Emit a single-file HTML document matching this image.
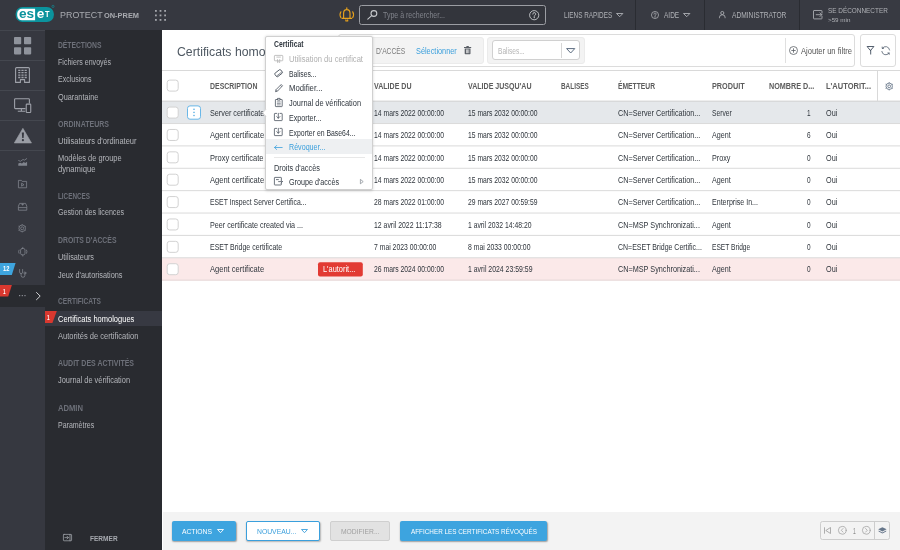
<!DOCTYPE html>
<html lang="fr"><head><meta charset="utf-8"><title>ESET PROTECT On-Prem</title>
<style>
*{box-sizing:border-box;margin:0;padding:0}
html,body{width:900px;height:550px;overflow:hidden;background:#fff;font-family:"Liberation Sans",sans-serif}
#app{will-change:transform;position:relative;width:900px;height:550px;overflow:hidden;background:#fff}
.a{position:absolute}
.t{position:absolute;white-space:nowrap;line-height:1;transform-origin:0 50%}
svg{position:absolute;overflow:visible}
.cb{position:absolute;left:166.6px;width:12px;height:12px;background:#fff;border:1px solid #d4d4d4;border-radius:3px}
.rl{position:absolute;left:162px;width:738px;height:1px;background:#dcdcdc}
</style></head><body><div id="app">

<!-- main white -->
<div class="a" style="left:162px;top:30px;width:738px;height:483px;background:#fff"></div>

<!-- header -->
<div class="a" style="left:0;top:0;width:900px;height:30px;background:#363840"></div>
<div class="a" style="left:550px;top:0;width:350px;height:30px;background:#383a42"></div>
<div class="a" style="left:635px;top:0;width:1px;height:30px;background:#2a2c32"></div>
<div class="a" style="left:703.5px;top:0;width:1px;height:30px;background:#2a2c32"></div>
<div class="a" style="left:799px;top:0;width:1px;height:30px;background:#2a2c32"></div>

<!-- logo -->
<svg style="left:0;top:0" width="60" height="30" viewBox="0 0 60 30"><rect x="15.600" y="7" width="38.300" height="15" rx="7" fill="#0b939d"/><path d="M22 8.800h13.100v11.500H22a4.800 4.800 0 0 1-4.800-4.800v-1.900a4.800 4.800 0 0 1 4.800-4.800z" fill="#fff"/><circle cx="53" cy="6.400" r="1.100" fill="none" stroke="#0b939d" stroke-width="0.600"/></svg>

<!-- grid dots -->
<svg style="left:155px;top:9.5px" width="12" height="12" viewBox="0 0 12 12" fill="#a3a5ab"><g>
<rect x="0" y="0" width="1.8" height="1.8"/><rect x="4.6" y="0" width="1.8" height="1.8"/><rect x="9.2" y="0" width="1.8" height="1.8"/>
<rect x="0" y="4.5" width="1.8" height="1.8"/><rect x="4.6" y="4.5" width="1.8" height="1.8"/><rect x="9.2" y="4.5" width="1.8" height="1.8"/>
<rect x="0" y="9" width="1.8" height="1.8"/><rect x="4.6" y="9" width="1.8" height="1.8"/><rect x="9.2" y="9" width="1.8" height="1.8"/></g></svg>

<!-- bell -->
<svg style="left:338.5px;top:7.4px" width="16" height="15" viewBox="0 0 16 15" fill="none" stroke="#e8a21c" stroke-width="1.15" stroke-linecap="round" stroke-linejoin="round">
<path d="M7.8 0.7v1.5M4.6 11.2V6.3a3.2 3.7 0 0 1 6.400 0v4.900M3 11.400h9.600M6.900 12.900v1.100h1.800v-1.100"/>
<path d="M1.900 4.800a5.600 5.600 0 0 0 0 5.800M13.700 4.800a5.600 5.600 0 0 1 0 5.800"/></svg>

<!-- search box -->
<div class="a" style="left:359px;top:5px;width:186.5px;height:19.8px;border:1px solid #9b9da3;border-radius:2.5px;background:#33353c"></div>
<svg style="left:366.5px;top:9.8px" width="11" height="10" viewBox="0 0 11 10" fill="none" stroke="#c6c8cc" stroke-width="1.1" stroke-linecap="round"><circle cx="6.9" cy="3.5" r="2.9"/><path d="M4.7 5.7L0.8 9.2"/></svg>
<svg style="left:529px;top:10px" width="10.4" height="10.4" viewBox="0 0 10.4 10.4" fill="none" stroke="#c6c8cc" stroke-width="0.9"><circle cx="5.2" cy="5.2" r="4.6"/><path d="M3.8 4.1a1.45 1.45 0 1 1 2 1.3c-.5.25-.6.5-.6 1" stroke-linecap="round"/><circle cx="5.2" cy="7.6" r="0.3" fill="#c6c8cc"/></svg>

<!-- header icons -->
<svg style="left:615.8px;top:13px" width="7.4" height="4.2" viewBox="0 0 7.4 4.2" fill="none" stroke="#b0b2b7" stroke-width="0.9" stroke-linejoin="round"><path d="M0.5 0.5h6.4L3.7 3.7z"/></svg>
<svg style="left:683.4px;top:13px" width="7.4" height="4.2" viewBox="0 0 7.4 4.2" fill="none" stroke="#b0b2b7" stroke-width="0.9" stroke-linejoin="round"><path d="M0.5 0.5h6.4L3.7 3.7z"/></svg>
<svg style="left:650.6px;top:11px" width="8" height="8" viewBox="0 0 10.4 10.4" fill="none" stroke="#b0b2b7" stroke-width="1"><circle cx="5.2" cy="5.2" r="4.6"/><path d="M3.8 4.1a1.45 1.45 0 1 1 2 1.3c-.5.25-.6.5-.6 1" stroke-linecap="round"/><circle cx="5.2" cy="7.7" r="0.35" fill="#b0b2b7"/></svg>
<svg style="left:718.6px;top:11.2px" width="6.6" height="7.4" viewBox="0 0 6.6 7.4" fill="none" stroke="#b0b2b7" stroke-width="0.85"><circle cx="3.3" cy="2" r="1.55"/><path d="M0.5 7.2V6.2a2.8 2.4 0 0 1 5.6 0v1"/></svg>
<svg style="left:812.6px;top:9.800px" width="9.600" height="9.400" viewBox="0 0 9.600 9.400" fill="none" stroke="#b0b2b7" stroke-width="0.850" stroke-linejoin="round" stroke-linecap="round"><path d="M9 3.100V1a.5.500 0 0 0-.5-.5H1a.5.500 0 0 0-.5.500v7.400a.5.500 0 0 0 .5.500h7.500a.5.500 0 0 0 .5-.5V6.300"/><path d="M3.200 4.700h5.600M7 2.900l1.800 1.800L7 6.500"/></svg>

<!-- sidebar -->
<div class="a" style="left:0;top:30px;width:45px;height:520px;background:#363840"></div>
<div class="a" style="left:0;top:30px;width:45px;height:1px;background:#43464e"></div>
<div class="a" style="left:45px;top:30px;width:117px;height:520px;background:#292b30"></div>
<div class="a" style="left:0;top:60px;width:45px;height:1px;background:#44474f"></div>
<div class="a" style="left:0;top:90px;width:45px;height:1px;background:#44474f"></div>
<div class="a" style="left:0;top:120px;width:45px;height:1px;background:#44474f"></div>
<div class="a" style="left:0;top:150px;width:45px;height:1px;background:#44474f"></div>
<div class="a" style="left:0;top:284.5px;width:45px;height:22px;background:#292b30"></div>
<div class="a" style="left:45px;top:311.3px;width:117px;height:14.8px;background:#373942"></div>

<!-- sidebar big icons -->
<svg style="left:13.8px;top:37.2px" width="17.4" height="17.6" viewBox="0 0 17.4 17.6" fill="#8f939c"><rect x="0" y="0" width="7.2" height="7.2" rx="0.8"/><rect x="10" y="0" width="7.2" height="7.2" rx="0.8"/><rect x="0" y="10.2" width="7.2" height="7.2" rx="0.8"/><rect x="10" y="10.2" width="7.2" height="7.2" rx="0.8"/></svg>
<svg style="left:15px;top:67.200px" width="15" height="16" viewBox="0 0 15 16" fill="none" stroke="#9ea1a9" stroke-width="1.100" stroke-linejoin="round"><path d="M0.600 15.400V1.600a1 1 0 0 1 1-1h11.800a1 1 0 0 1 1 1v13.800h-4.800v-2.800h-4.200v2.800z"/><g stroke-width="1.300"><path d="M3.200 3.300h2.200M6.400 3.300h2.200M9.600 3.300h2.200M3.200 5.700h2.200M6.400 5.700h2.200M9.600 5.700h2.200M3.200 8.100h2.200M6.400 8.100h2.200M9.600 8.100h2.200M3.200 10.500h2.200M6.400 10.500h2.200M9.600 10.500h2.200"/></g></svg>
<svg style="left:13.6px;top:97.6px" width="17.6" height="15.4" viewBox="0 0 17.6 15.4" fill="none" stroke="#9ea1a9" stroke-width="1.1" stroke-linejoin="round"><path d="M11.500 10.600H1.400a.8.800 0 0 1-.8-.8V1.500a.8.800 0 0 1 .8-.8h13.200a.8.800 0 0 1 .8.800v4"/><path d="M7.400 10.600v2.500M3.800 13.200h7.400"/><rect x="12.250" y="6.100" width="4.500" height="8.400" rx="0.700" fill="#31333a"/></svg>
<svg style="left:13.6px;top:127.600px" width="17.800" height="15.400" viewBox="0 0 17.800 15.400"><path d="M8.900 0.300L17.500 15H0.300z" fill="#9a9da5" stroke="#9a9da5" stroke-width="0.600" stroke-linejoin="round"/><path d="M7.800 4.600h2.200l-.4 5.400h-1.400z" fill="#363840"/><circle cx="8.900" cy="12.200" r="1.100" fill="#363840"/></svg>

<!-- sidebar small icons -->
<svg style="left:17.800px;top:157.600px" width="9.400" height="8" viewBox="0 0 9.400 8" fill="none" stroke="#80848d" stroke-width="0.800"><path d="M0.300 2.400L2.400 3.300 5 1.500 6.600 2.100 9 0.400"/><path d="M0.300 7.800V5.600L2.200 4.700 4 5.500 5.800 4.100 7.200 5 9.100 3.700V7.800z" fill="#80848d" stroke="none"/></svg>
<svg style="left:18.200px;top:180px" width="9" height="8.200" viewBox="0 0 9 8.200" fill="none" stroke="#80848d" stroke-width="0.800" stroke-linejoin="round"><path d="M0.400 7.800V0.400h3l.8 1h4.400v6.400z"/><path d="M3.600 3.200v3l2.400-1.500z"/></svg>
<svg style="left:18px;top:202.600px" width="9.200" height="7.600" viewBox="0 0 9.200 7.600" fill="none" stroke="#80848d" stroke-width="0.800" stroke-linejoin="round"><path d="M0.400 7.200V3.200L1.600 0.400h6l1.200 2.800v4zM0.400 4.600h8.400"/><path d="M3.800 1.200h1.600L4.600 2.300z" fill="#80848d"/></svg>
<svg style="left:18px;top:224.100px" width="8.400" height="8.600" viewBox="0 0 8.400 8.600" fill="none" stroke="#80848d" stroke-width="0.800"><circle cx="4.200" cy="4.300" r="3.300"/><circle cx="4.200" cy="4.300" r="1.500"/><path d="M4.200 0.200v.8M4.200 7.600v.8M0.500 2.200l.7.400M7.200 6l.7.400M0.500 6.400l.7-.4M7.200 2.600l.7-.4"/></svg>
<svg style="left:17.800px;top:246.800px" width="9.600" height="9.400" viewBox="0 0 9.600 9.400" fill="none" stroke="#80848d" stroke-width="0.800" stroke-linejoin="round" stroke-linecap="round"><rect x="2.600" y="1.500" width="4.400" height="6.400" rx="1.600"/><path d="M4.800 0.300v1.200M4.800 7.900v1.200M1 3.100a3.200 3.200 0 0 0 0 3.200M8.600 3.100a3.200 3.200 0 0 1 0 3.200"/></svg>
<svg style="left:19px;top:268.600px" width="7.600" height="8.800" viewBox="0 0 7.600 8.800" fill="none" stroke="#80848d" stroke-width="0.800" stroke-linecap="round"><path d="M0.600 0.500v2.600a1.500 1.500 0 0 0 3 0V0.500M2.100 4.600v1.800a1.900 1.900 0 0 0 3.800 0V5"/><circle cx="5.900" cy="4" r="1"/></svg>
<!-- badges -->
<svg style="left:0;top:262.600px" width="16" height="12" viewBox="0 0 16 12"><path d="M0 0h15.600L11.800 12H0z" fill="#3ea4dd"/></svg>
<svg style="left:0;top:285.300px" width="12" height="11.600" viewBox="0 0 12 11.600"><path d="M0 0h11.900L8.200 11.600H0z" fill="#d8382f"/></svg>
<svg style="left:45px;top:311.300px" width="12" height="12" viewBox="0 0 12 12"><path d="M0 0h11.800L7.400 12H0z" fill="#d8382f"/></svg>
<!-- dots + chevron -->
<svg style="left:19px;top:295.400px" width="7" height="1.400" viewBox="0 0 7 1.400" fill="#8f9199"><rect x="0" y="0" width="1.200" height="1.200"/><rect x="2.700" y="0" width="1.200" height="1.200"/><rect x="5.400" y="0" width="1.200" height="1.200"/></svg>
<svg style="left:36px;top:292px" width="4.800" height="8.200" viewBox="0 0 4.800 8.200" fill="none" stroke="#e4e5e8" stroke-width="0.900" stroke-linecap="round" stroke-linejoin="round"><path d="M0.500 0.500L4.200 4.100 0.500 7.700"/></svg>
<!-- fermer icon -->
<svg style="left:62.700px;top:533.700px" width="9" height="7.200" viewBox="0 0 9 7.200" fill="none" stroke="#a3a6ac" stroke-width="0.750" stroke-linejoin="round" stroke-linecap="round"><rect x="0.400" y="0.400" width="8.200" height="6.400" rx="0.600"/><path d="M7 0.400v6.400M1.900 3.600h3.400M4 2.200l1.400 1.400L4 5"/></svg>

<!-- toolbar -->
<div class="a" style="left:162px;top:70px;width:738px;height:1px;background:#d9d9d9"></div>
<div class="a" style="left:337.500px;top:33.700px;width:517.500px;height:33.400px;border:1px solid #dcdcdc;border-radius:3px;background:#fff"></div>
<div class="a" style="left:860px;top:33.700px;width:35.800px;height:33.400px;border:1px solid #dcdcdc;border-radius:3px;background:#fff"></div>
<div class="a" style="left:341px;top:37px;width:143.400px;height:26.600px;border:1px solid #ebebeb;border-radius:3px;background:#f3f3f3"></div>
<div class="a" style="left:487px;top:37px;width:98.200px;height:26.600px;border:1px solid #ebebeb;border-radius:3px;background:#f3f3f3"></div>
<div class="a" style="left:492px;top:40px;width:88px;height:20px;border:1px solid #d0d0d0;border-radius:3px;background:#fff"></div>
<div class="a" style="left:561.300px;top:43px;width:1px;height:14.600px;background:#d6d6d6"></div>
<div class="a" style="left:785px;top:37.500px;width:1px;height:25.600px;background:#e0e0e0"></div>
<svg style="left:565.800px;top:47.700px" width="9.400" height="5.800" viewBox="0 0 9.400 5.800" fill="none" stroke="#5b6b7f" stroke-width="1" stroke-linejoin="round"><path d="M0.600 0.600h8.200L4.700 5z"/></svg>
<!-- trash -->
<svg style="left:463.800px;top:46px" width="7.200" height="8.200" viewBox="0 0 7.200 8.200" fill="#5a5f66"><rect x="0" y="1" width="7.200" height="1"/><rect x="2.400" y="0" width="2.400" height="1.200"/><path d="M0.700 2.600h5.800v5a.6.600 0 0 1-.6.600H1.300a.6.600 0 0 1-.6-.6z"/><g fill="#f3f3f3"><rect x="2" y="3.400" width="0.700" height="3.800"/><rect x="3.250" y="3.400" width="0.700" height="3.800"/><rect x="4.500" y="3.400" width="0.700" height="3.800"/></g></svg>
<!-- add filter plus -->
<svg style="left:788.600px;top:46.200px" width="9" height="9" viewBox="0 0 9 9" fill="none" stroke="#5a5f66" stroke-width="0.800"><circle cx="4.500" cy="4.500" r="4"/><path d="M4.500 2.300v4.400M2.300 4.500h4.400"/></svg>
<!-- funnel + refresh -->
<svg style="left:866.600px;top:46.200px" width="7.400" height="8.600" viewBox="0 0 7.400 8.600" fill="none" stroke="#3f4c5c" stroke-width="0.900" stroke-linejoin="round" stroke-linecap="round"><path d="M0.500 0.500h6.400L3.700 4.300z"/><path d="M3.700 4.200v3.900"/></svg>
<svg style="left:880.800px;top:46px" width="9.400" height="9.400" viewBox="0 0 9.400 9.400" fill="none" stroke="#4a5767" stroke-width="0.750" stroke-linecap="round"><path d="M8.600 4A4 4 0 0 0 1.300 2.400M0.800 5.400A4 4 0 0 0 8.100 7"/><path d="M1.200 1v1.400h1.400M8.200 8.400V7H6.800" stroke-linejoin="round"/></svg>

<!-- table -->
<svg style="left:0;top:0" width="900" height="550" viewBox="0 0 900 550">
<rect x="162" y="101.15" width="738" height="22.38" fill="#e5e8eb"/>
<rect x="162" y="257.77" width="738" height="22.38" fill="#fbe9e9"/>
<rect x="162" y="100.65" width="738" height="1" fill="#cfcfcf"/>
<rect x="162" y="123.03" width="738" height="1" fill="#dadada"/>
<rect x="162" y="145.40" width="738" height="1" fill="#dadada"/>
<rect x="162" y="167.78" width="738" height="1" fill="#dadada"/>
<rect x="162" y="190.15" width="738" height="1" fill="#dadada"/>
<rect x="162" y="212.53" width="738" height="1" fill="#dadada"/>
<rect x="162" y="234.90" width="738" height="1" fill="#dadada"/>
<rect x="162" y="257.27" width="738" height="1" fill="#dadada"/>
<rect x="162" y="279.65" width="738" height="1" fill="#e3d3d3"/>
<rect x="877" y="70.500" width="1" height="30.500" fill="#d9d9d9"/>
<rect x="167.200" y="80.10" width="11" height="11" rx="2.500" fill="#fff" stroke="#d2d2d2" stroke-width="1"/>
<rect x="167.200" y="107.09" width="11" height="11" rx="2.500" fill="#fff" stroke="#d2d2d2" stroke-width="1"/>
<rect x="167.200" y="129.46" width="11" height="11" rx="2.500" fill="#fff" stroke="#d2d2d2" stroke-width="1"/>
<rect x="167.200" y="151.84" width="11" height="11" rx="2.500" fill="#fff" stroke="#d2d2d2" stroke-width="1"/>
<rect x="167.200" y="174.21" width="11" height="11" rx="2.500" fill="#fff" stroke="#d2d2d2" stroke-width="1"/>
<rect x="167.200" y="196.59" width="11" height="11" rx="2.500" fill="#fff" stroke="#d2d2d2" stroke-width="1"/>
<rect x="167.200" y="218.96" width="11" height="11" rx="2.500" fill="#fff" stroke="#d2d2d2" stroke-width="1"/>
<rect x="167.200" y="241.34" width="11" height="11" rx="2.500" fill="#fff" stroke="#d2d2d2" stroke-width="1"/>
<rect x="167.200" y="263.71" width="11" height="11" rx="2.500" fill="#fff" stroke="#d2d2d2" stroke-width="1"/>
<rect x="187.500" y="105.900" width="13" height="13.300" rx="2.500" fill="#fff" stroke="#69b7e8" stroke-width="1"/>
<rect x="193.350" y="108.65" width="1.300" height="1.300" fill="#4aa8e0"/>
<rect x="193.350" y="111.75" width="1.300" height="1.300" fill="#4aa8e0"/>
<rect x="193.350" y="114.85" width="1.300" height="1.300" fill="#4aa8e0"/>
<rect x="318" y="262.200" width="44.800" height="14.300" rx="2" fill="#e23a33"/>
</svg>
<!-- gear -->
<svg style="left:884.800px;top:81.800px" width="8.400" height="8.600" viewBox="0 0 8.400 8.600" fill="none" stroke="#5b6b7f" stroke-width="0.800"><circle cx="4.200" cy="4.300" r="3.200"/><circle cx="4.200" cy="4.300" r="1.400"/><path d="M4.200 0.200v.9M4.200 7.500v.9M0.600 2.200l.8.450M7 5.950l.8.450M0.600 6.400l.8-.45M7 2.650l.8-.450"/></svg>

<!-- bottom bar -->
<div class="a" style="left:163px;top:512px;width:737px;height:38px;background:#f3f3f3"></div>
<div class="a" style="left:172px;top:521px;width:64px;height:19.700px;border-radius:2px;background:#3da4df;box-shadow:0.500px 1px 1.500px rgba(0,0,0,.35)"></div>
<div class="a" style="left:246px;top:521px;width:74px;height:19.700px;border-radius:2px;background:#fff;border:1px solid #3a9fdc;box-shadow:0.500px 1px 1.500px rgba(0,0,0,.25)"></div>
<div class="a" style="left:330.300px;top:521px;width:59.400px;height:19.700px;border-radius:2px;background:#e2e2e2;border:1px solid #cfcfcf"></div>
<div class="a" style="left:400px;top:521px;width:147.300px;height:19.700px;border-radius:2px;background:#3da4df;box-shadow:0.500px 1px 1.500px rgba(0,0,0,.35)"></div>
<svg style="left:217.300px;top:529px" width="7" height="4.200" viewBox="0 0 7 4.200" fill="none" stroke="#fff" stroke-width="0.900" stroke-linejoin="round"><path d="M0.500 0.500h6L3.500 3.700z"/></svg>
<svg style="left:301.200px;top:529px" width="7" height="4.200" viewBox="0 0 7 4.200" fill="none" stroke="#3a9fdc" stroke-width="0.900" stroke-linejoin="round"><path d="M0.500 0.500h6L3.500 3.700z"/></svg>
<!-- pagination -->
<div class="a" style="left:820px;top:521px;width:69.800px;height:18.800px;border:1px solid #cdcdcd;border-radius:2.500px;background:#f3f3f3"></div>
<div class="a" style="left:874.200px;top:521px;width:1px;height:18.800px;background:#cdcdcd"></div>
<svg style="left:824.200px;top:527px" width="7" height="7" viewBox="0 0 7 7" fill="none" stroke="#9a9a9a" stroke-width="0.800" stroke-linejoin="round"><path d="M0.500 0.300v6.400M6.500 0.500v6L1.800 3.500z"/></svg>
<svg style="left:838.200px;top:526.200px" width="8.600" height="8.600" viewBox="0 0 8.600 8.600" fill="none" stroke="#9a9a9a" stroke-width="0.700" stroke-linecap="round" stroke-linejoin="round"><circle cx="4.300" cy="4.300" r="3.900"/><path d="M5 2.500L3.300 4.300 5 6.100"/></svg>
<svg style="left:861.800px;top:526.200px" width="8.600" height="8.600" viewBox="0 0 8.600 8.600" fill="none" stroke="#9a9a9a" stroke-width="0.700" stroke-linecap="round" stroke-linejoin="round"><circle cx="4.300" cy="4.300" r="3.900"/><path d="M3.600 2.500L5.300 4.300 3.600 6.100"/></svg>
<svg style="left:877.600px;top:527.200px" width="8.800" height="6.800" viewBox="0 0 8.800 6.800" fill="#66768a"><path d="M4.400 0.200L8.600 2.200 4.400 4.400 0.200 2.200z"/><path d="M0.600 3.400v1L4.400 6.600l3.800-2.200v-1L4.400 5.400z"/></svg>

<span class="t" style="left:59.7px;top:10.00px;font-size:9.8px;color:#a9abb0;transform:scaleX(0.9100);">PROTECT</span>
<span class="t" style="left:104.3px;top:13.00px;font-size:6.9px;color:#a9abb0;font-weight:700;transform:scaleX(1.0754);">ON-PREM</span>
<span class="t" style="left:383.0px;top:11.00px;font-size:8.4px;color:#80838b;transform:scaleX(0.8375);">Type à rechercher...</span>
<span class="t" style="left:563.8px;top:11.00px;font-size:8.4px;color:#b0b2b7;transform:scaleX(0.7613);">LIENS RAPIDES</span>
<span class="t" style="left:664.4px;top:11.00px;font-size:8.4px;color:#b0b2b7;transform:scaleX(0.7770);">AIDE</span>
<span class="t" style="left:732.4px;top:11.00px;font-size:8.4px;color:#b0b2b7;transform:scaleX(0.7934);">ADMINISTRATOR</span>
<span class="t" style="left:827.6px;top:7.00px;font-size:7.5px;color:#b0b2b7;transform:scaleX(0.8541);">SE DÉCONNECTER</span>
<span class="t" style="left:827.6px;top:17.00px;font-size:6.2px;color:#b0b2b7;transform:scaleX(1.0096);">&gt;59 min</span>
<span class="t" style="left:57.6px;top:41.00px;font-size:8.3px;color:#6d7079;font-weight:700;transform:scaleX(0.8133);">DÉTECTIONS</span>
<span class="t" style="left:57.6px;top:58.00px;font-size:8.4px;color:#b4b6bb;transform:scaleX(0.8450);">Fichiers envoyés</span>
<span class="t" style="left:57.6px;top:75.00px;font-size:8.4px;color:#b4b6bb;transform:scaleX(0.8368);">Exclusions</span>
<span class="t" style="left:57.6px;top:93.00px;font-size:8.4px;color:#b4b6bb;transform:scaleX(0.8740);">Quarantaine</span>
<span class="t" style="left:57.6px;top:120.00px;font-size:8.3px;color:#6d7079;font-weight:700;transform:scaleX(0.8467);">ORDINATEURS</span>
<span class="t" style="left:57.6px;top:137.00px;font-size:8.4px;color:#b4b6bb;transform:scaleX(0.8949);">Utilisateurs d'ordinateur</span>
<span class="t" style="left:57.6px;top:154.00px;font-size:8.4px;color:#b4b6bb;transform:scaleX(0.8856);">Modèles de groupe</span>
<span class="t" style="left:57.6px;top:165.00px;font-size:8.4px;color:#b4b6bb;transform:scaleX(0.9150);">dynamique</span>
<span class="t" style="left:57.6px;top:192.00px;font-size:8.3px;color:#6d7079;font-weight:700;transform:scaleX(0.7628);">LICENCES</span>
<span class="t" style="left:57.6px;top:208.00px;font-size:8.4px;color:#b4b6bb;transform:scaleX(0.8540);">Gestion des licences</span>
<span class="t" style="left:57.6px;top:236.00px;font-size:8.3px;color:#6d7079;font-weight:700;transform:scaleX(0.8278);">DROITS D'ACCÈS</span>
<span class="t" style="left:57.6px;top:253.00px;font-size:8.4px;color:#b4b6bb;transform:scaleX(0.8691);">Utilisateurs</span>
<span class="t" style="left:57.6px;top:271.00px;font-size:8.4px;color:#b4b6bb;transform:scaleX(0.8744);">Jeux d'autorisations</span>
<span class="t" style="left:57.6px;top:297.00px;font-size:8.3px;color:#6d7079;font-weight:700;transform:scaleX(0.7929);">CERTIFICATS</span>
<span class="t" style="left:57.6px;top:315.00px;font-size:8.4px;color:#ffffff;transform:scaleX(0.8957);">Certificats homologues</span>
<span class="t" style="left:57.6px;top:332.00px;font-size:8.4px;color:#b4b6bb;transform:scaleX(0.8994);">Autorités de certification</span>
<span class="t" style="left:57.6px;top:359.00px;font-size:8.3px;color:#6d7079;font-weight:700;transform:scaleX(0.8440);">AUDIT DES ACTIVITÉS</span>
<span class="t" style="left:57.6px;top:376.00px;font-size:8.4px;color:#b4b6bb;transform:scaleX(0.8838);">Journal de vérification</span>
<span class="t" style="left:57.6px;top:404.00px;font-size:8.3px;color:#6d7079;font-weight:700;transform:scaleX(0.9190);">ADMIN</span>
<span class="t" style="left:57.6px;top:421.00px;font-size:8.4px;color:#b4b6bb;transform:scaleX(0.8361);">Paramètres</span>
<span class="t" style="left:89.6px;top:535.00px;font-size:7.8px;color:#a6a9af;font-weight:700;transform:scaleX(0.8383);">FERMER</span>
<span class="t" style="left:2.8px;top:266.00px;font-size:6.6px;color:#fff;font-weight:700;transform:scaleX(0.8715);">12</span>
<span class="t" style="left:2.8px;top:289.00px;font-size:6.6px;color:#fff;font-weight:700;transform:scaleX(0.7081);">1</span>
<span class="t" style="left:47.4px;top:315.00px;font-size:6.6px;color:#fff;font-weight:700;transform:scaleX(0.7081);">1</span>
<span class="t" style="left:176.6px;top:46.00px;font-size:12px;color:#4e5862;transform:scaleX(1.0217);">Certificats homologues</span>
<span class="t" style="left:344.8px;top:48.00px;font-size:8.2px;color:#7a7a7a;transform:scaleX(0.7465);">GROUPE</span>
<span class="t" style="left:375.7px;top:48.00px;font-size:8.2px;color:#7a7a7a;transform:scaleX(0.8210);">D'ACCÈS</span>
<span class="t" style="left:415.7px;top:48.00px;font-size:8.2px;color:#3a9fdc;transform:scaleX(0.8964);">Sélectionner</span>
<span class="t" style="left:498.3px;top:48.00px;font-size:8.2px;color:#b5b5b5;transform:scaleX(0.8038);">Balises...</span>
<span class="t" style="left:801.0px;top:48.00px;font-size:8.2px;color:#555;transform:scaleX(0.9260);">Ajouter un filtre</span>
<span class="t" style="left:209.8px;top:82.00px;font-size:8.4px;color:#5c5c5c;font-weight:700;transform:scaleX(0.8279);">DESCRIPTION</span>
<span class="t" style="left:373.9px;top:82.00px;font-size:8.4px;color:#5c5c5c;font-weight:700;transform:scaleX(0.8424);">VALIDE DU</span>
<span class="t" style="left:467.5px;top:82.00px;font-size:8.4px;color:#5c5c5c;font-weight:700;transform:scaleX(0.8426);">VALIDE JUSQU'AU</span>
<span class="t" style="left:560.8px;top:82.00px;font-size:8.4px;color:#5c5c5c;font-weight:700;transform:scaleX(0.7628);">BALISES</span>
<span class="t" style="left:617.7px;top:82.00px;font-size:8.4px;color:#5c5c5c;font-weight:700;transform:scaleX(0.8033);">ÉMETTEUR</span>
<span class="t" style="left:712.3px;top:82.00px;font-size:8.4px;color:#5c5c5c;font-weight:700;transform:scaleX(0.8677);">PRODUIT</span>
<span class="t" style="left:769.0px;top:82.00px;font-size:8.4px;color:#5c5c5c;font-weight:700;transform:scaleX(0.8616);">NOMBRE D...</span>
<span class="t" style="left:826.0px;top:82.00px;font-size:8.4px;color:#5c5c5c;font-weight:700;transform:scaleX(0.8958);">L'AUTORIT...</span>
<span class="t" style="left:209.6px;top:109.00px;font-size:8.4px;color:#2f353c;transform:scaleX(0.8656);">Server certificate</span>
<span class="t" style="left:373.9px;top:109.00px;font-size:8.4px;color:#2f353c;transform:scaleX(0.8126);">14 mars 2022 00:00:00</span>
<span class="t" style="left:467.5px;top:109.00px;font-size:8.4px;color:#2f353c;transform:scaleX(0.8068);">15 mars 2032 00:00:00</span>
<span class="t" style="left:617.7px;top:109.00px;font-size:8.4px;color:#2f353c;transform:scaleX(0.8646);">CN=Server Certification...</span>
<span class="t" style="left:712.3px;top:109.00px;font-size:8.4px;color:#2f353c;transform:scaleX(0.7985);">Server</span>
<span class="t" style="left:806.6px;top:109.00px;font-size:8.4px;color:#2f353c;transform:scaleX(0.7706);">1</span>
<span class="t" style="left:826.0px;top:109.00px;font-size:8.4px;color:#2f353c;transform:scaleX(0.8661);">Oui</span>
<span class="t" style="left:209.6px;top:131.00px;font-size:8.4px;color:#2f353c;transform:scaleX(0.9007);">Agent certificate</span>
<span class="t" style="left:373.9px;top:131.00px;font-size:8.4px;color:#2f353c;transform:scaleX(0.8126);">14 mars 2022 00:00:00</span>
<span class="t" style="left:467.5px;top:131.00px;font-size:8.4px;color:#2f353c;transform:scaleX(0.8068);">15 mars 2032 00:00:00</span>
<span class="t" style="left:617.7px;top:131.00px;font-size:8.4px;color:#2f353c;transform:scaleX(0.8646);">CN=Server Certification...</span>
<span class="t" style="left:712.3px;top:131.00px;font-size:8.4px;color:#2f353c;transform:scaleX(0.8542);">Agent</span>
<span class="t" style="left:806.6px;top:131.00px;font-size:8.4px;color:#2f353c;transform:scaleX(0.7706);">6</span>
<span class="t" style="left:826.0px;top:131.00px;font-size:8.4px;color:#2f353c;transform:scaleX(0.8661);">Oui</span>
<span class="t" style="left:209.6px;top:154.00px;font-size:8.4px;color:#2f353c;transform:scaleX(0.8963);">Proxy certificate</span>
<span class="t" style="left:373.9px;top:154.00px;font-size:8.4px;color:#2f353c;transform:scaleX(0.8126);">14 mars 2022 00:00:00</span>
<span class="t" style="left:467.5px;top:154.00px;font-size:8.4px;color:#2f353c;transform:scaleX(0.8068);">15 mars 2032 00:00:00</span>
<span class="t" style="left:617.7px;top:154.00px;font-size:8.4px;color:#2f353c;transform:scaleX(0.8646);">CN=Server Certification...</span>
<span class="t" style="left:712.3px;top:154.00px;font-size:8.4px;color:#2f353c;transform:scaleX(0.8589);">Proxy</span>
<span class="t" style="left:806.6px;top:154.00px;font-size:8.4px;color:#2f353c;transform:scaleX(0.7706);">0</span>
<span class="t" style="left:826.0px;top:154.00px;font-size:8.4px;color:#2f353c;transform:scaleX(0.8661);">Oui</span>
<span class="t" style="left:209.6px;top:176.00px;font-size:8.4px;color:#2f353c;transform:scaleX(0.9007);">Agent certificate</span>
<span class="t" style="left:373.9px;top:176.00px;font-size:8.4px;color:#2f353c;transform:scaleX(0.8126);">14 mars 2022 00:00:00</span>
<span class="t" style="left:467.5px;top:176.00px;font-size:8.4px;color:#2f353c;transform:scaleX(0.8068);">15 mars 2032 00:00:00</span>
<span class="t" style="left:617.7px;top:176.00px;font-size:8.4px;color:#2f353c;transform:scaleX(0.8646);">CN=Server Certification...</span>
<span class="t" style="left:712.3px;top:176.00px;font-size:8.4px;color:#2f353c;transform:scaleX(0.8542);">Agent</span>
<span class="t" style="left:806.6px;top:176.00px;font-size:8.4px;color:#2f353c;transform:scaleX(0.7706);">0</span>
<span class="t" style="left:826.0px;top:176.00px;font-size:8.4px;color:#2f353c;transform:scaleX(0.8661);">Oui</span>
<span class="t" style="left:209.6px;top:198.00px;font-size:8.4px;color:#2f353c;transform:scaleX(0.8164);">ESET Inspect Server Certifica...</span>
<span class="t" style="left:373.9px;top:198.00px;font-size:8.4px;color:#2f353c;transform:scaleX(0.8126);">28 mars 2022 01:00:00</span>
<span class="t" style="left:467.5px;top:198.00px;font-size:8.4px;color:#2f353c;transform:scaleX(0.8068);">29 mars 2027 00:59:59</span>
<span class="t" style="left:617.7px;top:198.00px;font-size:8.4px;color:#2f353c;transform:scaleX(0.8646);">CN=Server Certification...</span>
<span class="t" style="left:712.3px;top:198.00px;font-size:8.4px;color:#2f353c;transform:scaleX(0.8445);">Enterprise In...</span>
<span class="t" style="left:806.6px;top:198.00px;font-size:8.4px;color:#2f353c;transform:scaleX(0.7706);">0</span>
<span class="t" style="left:826.0px;top:198.00px;font-size:8.4px;color:#2f353c;transform:scaleX(0.8661);">Oui</span>
<span class="t" style="left:209.6px;top:221.00px;font-size:8.4px;color:#2f353c;transform:scaleX(0.8583);">Peer certificate created via ...</span>
<span class="t" style="left:373.9px;top:221.00px;font-size:8.4px;color:#2f353c;transform:scaleX(0.8229);">12 avril 2022 11:17:38</span>
<span class="t" style="left:467.5px;top:221.00px;font-size:8.4px;color:#2f353c;transform:scaleX(0.8117);">1 avril 2032 14:48:20</span>
<span class="t" style="left:617.7px;top:221.00px;font-size:8.4px;color:#2f353c;transform:scaleX(0.8660);">CN=MSP Synchronizati...</span>
<span class="t" style="left:712.3px;top:221.00px;font-size:8.4px;color:#2f353c;transform:scaleX(0.8542);">Agent</span>
<span class="t" style="left:806.6px;top:221.00px;font-size:8.4px;color:#2f353c;transform:scaleX(0.7706);">0</span>
<span class="t" style="left:826.0px;top:221.00px;font-size:8.4px;color:#2f353c;transform:scaleX(0.8661);">Oui</span>
<span class="t" style="left:209.6px;top:243.00px;font-size:8.4px;color:#2f353c;transform:scaleX(0.8341);">ESET Bridge certificate</span>
<span class="t" style="left:373.9px;top:243.00px;font-size:8.4px;color:#2f353c;transform:scaleX(0.8157);">7 mai 2023 00:00:00</span>
<span class="t" style="left:467.5px;top:243.00px;font-size:8.4px;color:#2f353c;transform:scaleX(0.8183);">8 mai 2033 00:00:00</span>
<span class="t" style="left:617.7px;top:243.00px;font-size:8.4px;color:#2f353c;transform:scaleX(0.8338);">CN=ESET Bridge Certific...</span>
<span class="t" style="left:712.3px;top:243.00px;font-size:8.4px;color:#2f353c;transform:scaleX(0.7915);">ESET Bridge</span>
<span class="t" style="left:806.6px;top:243.00px;font-size:8.4px;color:#2f353c;transform:scaleX(0.7706);">0</span>
<span class="t" style="left:826.0px;top:243.00px;font-size:8.4px;color:#2f353c;transform:scaleX(0.8661);">Oui</span>
<span class="t" style="left:209.6px;top:265.00px;font-size:8.4px;color:#2f353c;transform:scaleX(0.9007);">Agent certificate</span>
<span class="t" style="left:373.9px;top:265.00px;font-size:8.4px;color:#2f353c;transform:scaleX(0.8126);">26 mars 2024 00:00:00</span>
<span class="t" style="left:467.5px;top:265.00px;font-size:8.4px;color:#2f353c;transform:scaleX(0.8244);">1 avril 2024 23:59:59</span>
<span class="t" style="left:617.7px;top:265.00px;font-size:8.4px;color:#2f353c;transform:scaleX(0.8660);">CN=MSP Synchronizati...</span>
<span class="t" style="left:712.3px;top:265.00px;font-size:8.4px;color:#2f353c;transform:scaleX(0.8542);">Agent</span>
<span class="t" style="left:806.6px;top:265.00px;font-size:8.4px;color:#2f353c;transform:scaleX(0.7706);">0</span>
<span class="t" style="left:826.0px;top:265.00px;font-size:8.4px;color:#2f353c;transform:scaleX(0.8661);">Oui</span>
<span class="t" style="left:322.9px;top:265.00px;font-size:8.4px;color:#ffffff;transform:scaleX(0.8846);">L'autorit...</span>
<span class="t" style="left:182.3px;top:528.00px;font-size:7.6px;color:#fff;transform:scaleX(0.8885);">ACTIONS</span>
<span class="t" style="left:256.7px;top:528.00px;font-size:7.6px;color:#3a9fdc;transform:scaleX(0.8954);">NOUVEAU...</span>
<span class="t" style="left:340.7px;top:528.00px;font-size:7.6px;color:#a0a0a0;transform:scaleX(0.8883);">MODIFIER...</span>
<span class="t" style="left:410.7px;top:528.00px;font-size:7.6px;color:#fff;transform:scaleX(0.8356);">AFFICHER LES CERTIFICATS RÉVOQUÉS</span>
<span class="t" style="left:853.0px;top:527.00px;font-size:8.4px;color:#8a8a8a;transform:scaleX(0.5993);">1</span>
<!-- popup -->
<div class="a" style="left:265px;top:36px;width:108px;height:154px;background:#fff;border:1px solid #d0d0d0;border-radius:2px;box-shadow:0 0.5px 3px rgba(0,0,0,.16)"></div>
<div class="a" style="left:266px;top:139px;width:106px;height:15px;background:#eef0f2"></div>
<div class="a" style="left:274px;top:157px;width:91px;height:1px;background:#e8e8e8"></div>
<!-- popup pointer -->
<svg style="left:261.600px;top:108.900px" width="4.400" height="7.600" viewBox="0 0 4.400 7.600"><path d="M4.400 0L0.700 3.800l3.700 3.800z" fill="#fff"/><path d="M4.200 0.200L0.700 3.800l3.500 3.600" fill="none" stroke="#d6d6d6" stroke-width="0.700"/></svg>
<!-- popup icons -->
<svg style="left:274px;top:54.500px" width="9.200" height="8" viewBox="0 0 9.200 8" fill="none" stroke="#b4b4b4" stroke-width="0.800" stroke-linejoin="round"><rect x="0.400" y="0.400" width="8.400" height="5.400" rx="0.600"/><path d="M2.400 2.100h4.400M3.500 4.200v3.400l1.100-.8 1.100.8V4.200"/></svg>
<svg style="left:273.800px;top:68.600px" width="9.400" height="8.400" viewBox="0 0 9.400 8.400" fill="none" stroke="#4a535e" stroke-width="0.850" stroke-linejoin="round"><g transform="rotate(-38 4.600 4.200)"><rect x="0.900" y="2" width="7.400" height="4.400" rx="1"/><path d="M1.200 5.200h6.800" stroke-width="0.600"/></g></svg>
<svg style="left:274.600px;top:84px" width="8" height="8.200" viewBox="0 0 8 8.200" fill="none" stroke="#4a535e" stroke-width="0.800" stroke-linejoin="round"><path d="M0.500 7.700l.5-2L6.200 0.500l1.300 1.300L2.400 7.200z"/><path d="M5.300 1.400l1.300 1.300M1 5.700l1.400 1.500" stroke-width="0.600"/></svg>
<svg style="left:274.800px;top:98.200px" width="7.600" height="9" viewBox="0 0 7.600 9" fill="none" stroke="#4a535e" stroke-width="0.800" stroke-linejoin="round"><rect x="0.400" y="1.500" width="6.800" height="7.100" rx="0.400"/><rect x="2.500" y="0.400" width="2.600" height="1.700" fill="#fff"/><path d="M1.900 3.900h3.800M1.900 5.400h3.800M1.900 6.900h3.800" stroke-width="0.600"/></svg>
<svg style="left:274px;top:113px" width="8.600" height="8" viewBox="0 0 8.600 8" fill="none" stroke="#4a535e" stroke-width="0.800" stroke-linejoin="round" stroke-linecap="round"><path d="M2.600 0.400H0.900a.5.500 0 0 0-.5.500v6.200a.5.500 0 0 0 .5.500h6.800a.5.500 0 0 0 .5-.5V0.900a.5.500 0 0 0-.5-.5H6"/><path d="M4.300 0.300v4.900M2.700 3.600l1.600 1.600 1.600-1.600"/></svg>
<svg style="left:274px;top:127.700px" width="8.600" height="8" viewBox="0 0 8.600 8" fill="none" stroke="#4a535e" stroke-width="0.800" stroke-linejoin="round" stroke-linecap="round"><path d="M2.600 0.400H0.900a.5.500 0 0 0-.5.500v6.200a.5.500 0 0 0 .5.500h6.800a.5.500 0 0 0 .5-.5V0.900a.5.500 0 0 0-.5-.5H6"/><path d="M4.300 0.300v4.900M2.700 3.600l1.600 1.600 1.600-1.600"/></svg>
<svg style="left:274.400px;top:144.600px" width="8.600" height="5" viewBox="0 0 8.600 5" fill="none" stroke="#3a9fdc" stroke-width="0.800" stroke-linecap="round" stroke-linejoin="round"><path d="M0.600 2.500h7.600M2.600 0.500L0.600 2.500l2 2"/></svg>
<svg style="left:274px;top:177.200px" width="9" height="8.400" viewBox="0 0 9 8.400" fill="none" stroke="#4a535e" stroke-width="0.800" stroke-linejoin="round" stroke-linecap="round"><path d="M7.400 2.800V0.900a.5.500 0 0 0-.5-.5H0.900a.5.500 0 0 0-.5.500v6.600a.5.500 0 0 0 .5.500h6a.5.500 0 0 0 .5-.5V6.300"/><path d="M2.400 2.600h2M4.600 4.600h3.800M7 3.200l1.400 1.400L7 6"/></svg>
<svg style="left:359.600px;top:179px" width="3.600" height="5.200" viewBox="0 0 3.600 5.200" fill="none" stroke="#6a727b" stroke-width="0.600" stroke-linejoin="round"><path d="M0.400 0.400v4.400L3.200 2.600z"/></svg>

<span class="t" style="left:273.6px;top:40.00px;font-size:8.3px;color:#2f363e;font-weight:700;transform:scaleX(0.8202);">Certificat</span>
<span class="t" style="left:288.8px;top:55.00px;font-size:8.4px;color:#b0b0b0;transform:scaleX(0.9083);">Utilisation du certificat</span>
<span class="t" style="left:288.8px;top:70.00px;font-size:8.4px;color:#2f363e;transform:scaleX(0.8092);">Balises...</span>
<span class="t" style="left:288.8px;top:84.00px;font-size:8.4px;color:#2f363e;transform:scaleX(0.9225);">Modifier...</span>
<span class="t" style="left:288.8px;top:99.00px;font-size:8.4px;color:#2f363e;transform:scaleX(0.8838);">Journal de vérification</span>
<span class="t" style="left:288.8px;top:114.00px;font-size:8.4px;color:#2f363e;transform:scaleX(0.8514);">Exporter...</span>
<span class="t" style="left:288.8px;top:129.00px;font-size:8.4px;color:#2f363e;transform:scaleX(0.8208);">Exporter en Base64...</span>
<span class="t" style="left:288.8px;top:143.00px;font-size:8.4px;color:#3a9fdc;transform:scaleX(0.8519);">Révoquer...</span>
<span class="t" style="left:274.0px;top:164.00px;font-size:8.4px;color:#2f363e;transform:scaleX(0.8788);">Droits d'accès</span>
<span class="t" style="left:288.8px;top:178.00px;font-size:8.4px;color:#2f363e;transform:scaleX(0.8561);">Groupe d'accès</span>
<!-- logo text -->
<span class="t" style="left:18.900px;top:7.100px;font-size:13.600px;font-weight:700;color:#0b939d">es</span>
<span class="t" style="left:36.700px;top:7.100px;font-size:13.600px;font-weight:700;color:#fff">e</span>
<span class="t" style="left:45.300px;top:10.900px;font-size:8.200px;font-weight:700;color:#fff;transform:scaleX(0.900)">T</span>
</div></body></html>
